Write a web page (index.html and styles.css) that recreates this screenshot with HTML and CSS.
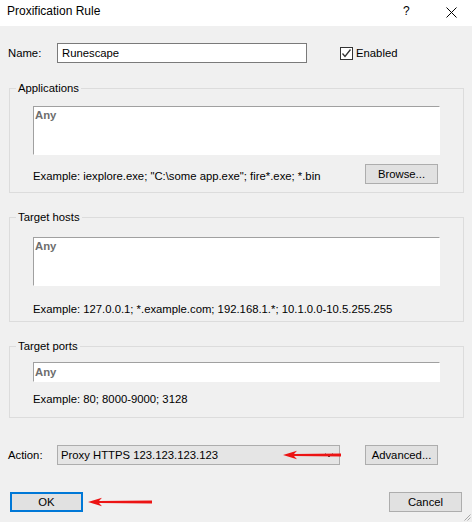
FILE: index.html
```html
<!DOCTYPE html>
<html lang="en">
<head>
	<meta charset="UTF-8">
	<title>Proxification Rule</title>
<link rel="stylesheet" href="styles.css">
</head>

<body>
<div class="dialog">
	<div class="titlebar">
		<span class="title">Proxification Rule</span>
		<span class="help">?</span>
		<span class="close">
			<svg width="11" height="11" viewBox="0 0 11 11"><path d="M0.5 0.5 L10.5 10.5 M10.5 0.5 L0.5 10.5" stroke="#000" stroke-width="1" fill="none"/></svg>
		</span>
	</div>

	<div class="name_row">
		<span class="lbl">Name:</span>
		<div class="edit name_edit">Runescape</div>
		<span class="check">
			<span class="box">
				<svg width="11" height="11" viewBox="0 0 11 11"><path d="M1.5 5.5 L4 8.5 L9.5 1.5" stroke="#333" stroke-width="1.3" fill="none"/></svg>
			</span>
			Enabled
		</span>
	</div>

	<fieldset class="group apps">
		<legend>Applications</legend>
		<div class="list">Any</div>
		<div class="hint_row">
			<span class="hint">Example: iexplore.exe; "C:\some app.exe"; fire*.exe; *.bin</span>
			<button class="btn">Browse...</button>
		</div>
	</fieldset>

	<fieldset class="group hosts">
		<legend>Target hosts</legend>
		<div class="list">Any</div>
		<div class="hint">Example: 127.0.0.1; *.example.com; 192.168.1.*; 10.1.0.0-10.5.255.255</div>
	</fieldset>

	<fieldset class="group ports">
		<legend>Target ports</legend>
		<div class="list single">Any</div>
		<div class="hint">Example: 80; 8000-9000; 3128</div>
	</fieldset>

	<div class="action_row">
		<span class="lbl">Action:</span>
		<div class="combo">
			<span>Proxy HTTPS 123.123.123.123</span>
			<svg class="drop" width="8" height="5" viewBox="0 0 8 5"><path d="M0.5 0.5 L4 4 L7.5 0.5" stroke="#444" fill="none"/></svg>
			<svg class="mark combo_mark" width="58" height="10" viewBox="0 0 58 10"><path d="M0 5 L14 0.8 L11 4 L58 3.6 L58 6.4 L11 6 L14 9.2 Z" fill="#ec1414"/></svg>
		</div>
		<button class="btn">Advanced...</button>
	</div>

	<div class="button_row">
		<div class="ok_wrap">
			<button class="btn ok">OK</button>
			<svg class="mark" width="64" height="10" viewBox="0 0 64 10"><path d="M0 5 L14 0.8 L11 4 L64 3.6 L64 6.4 L11 6 L14 9.2 Z" fill="#ec1414"/></svg>
		</div>
		<button class="btn">Cancel</button>
	</div>

	<div class="grip_row">
		<svg width="8" height="8" viewBox="0 0 8 8"><path d="M7.5 1.5 L1.5 7.5 M7.5 4.5 L4.5 7.5" stroke="#a6a6a6" fill="none"/></svg>
	</div>
</div>
</body>
</html>
```

FILE: styles.css
```css
* { margin:0; padding:0; box-sizing:border-box;}
body { background:#f0f0f0; font-family:"Liberation Sans", Arial, sans-serif; font-size:11.3px; color:#000;}
.dialog { width:472px; height:522px; overflow:hidden; background:#f0f0f0;}

/* title bar */
.titlebar { height:26px; background:#fff; display:flex; align-items:flex-start; padding:3px 0 0 7px;}
.titlebar .title { line-height:16px; flex:1; font-size:12px;}
.titlebar .help { line-height:16px; width:43px; font-size:12px;}
.titlebar .close { width:26px; padding-top:4px;}
.titlebar .close svg { display:block;}

/* name row */
.name_row { display:flex; align-items:center; height:20px; margin-top:17px; padding-left:8px;}
.lbl { width:49px; line-height:16px;}
.edit { background:#fff; border:1px solid #7a7a7a; height:20px; line-height:18px; padding-left:4px;}
.name_edit { width:250px;}
.check { display:flex; align-items:center; margin-left:33px; line-height:16px;}
.check .box { width:13px; height:13px; border:1px solid #333; background:#fff; margin-right:3px;}
.check .box svg { display:block;}

/* group boxes */
.group { border:1px solid #dcdcdc; margin:17px 8px 0 9px; padding:0 25px 8px 23px; min-width:0;}
.group legend { margin-left:-17px; padding:0 2px; line-height:16px;}
.group + .group { margin-top:16px;}

.list { width:407px; height:49px; background:#fff; border:1px solid; border-color:#a0a0a0 #fff #fff #a0a0a0; padding:1px 0 0 1px; font-weight:bold; color:#6d6d6d; line-height:14px;}
.list.single { height:20px; line-height:16px; padding-top:1px;}
.hint { line-height:16px;}

.apps .list { margin-top:10px;}
.hint_row { display:flex; justify-content:space-between; align-items:flex-start; margin-top:9px;}
.hint_row .hint { margin-top:4px;}

.hosts .list { margin-top:12px;}
.hosts .hint { margin-top:15px;}
.hosts { padding-bottom:4px;}

.ports .list { margin-top:8px;}
.ports .hint { margin-top:9px;}
.ports { padding-bottom:10px;}

/* buttons */
.btn { width:73px; height:20px; background:#e1e1e1; border:1px solid #adadad; font-family:inherit; font-size:11.3px; color:#000; line-height:16px;}
.btn.ok { border:2px solid #0078d7;}

/* action row */
.action_row { display:flex; align-items:center; margin-top:27px; padding-left:8px;}
.combo { position:relative; width:283px; height:20px; background:#e5e5e5; border:1px solid #adadad; padding-left:3px; line-height:18px; display:flex; align-items:center; justify-content:space-between; padding-right:6px; margin-right:25px;}
.combo .drop { display:block;}
.mark { display:block;}
.combo_mark { position:absolute; left:225px; top:4px;}

.button_row { display:flex; justify-content:space-between; align-items:center; margin-top:27px; padding:0 10px;}
.ok_wrap { display:flex; align-items:center;}
.ok_wrap .mark { margin-left:5px;}

.grip_row { display:flex; justify-content:flex-end; padding:1px 1px 0 0;}
.grip_row svg { display:block;}
```
